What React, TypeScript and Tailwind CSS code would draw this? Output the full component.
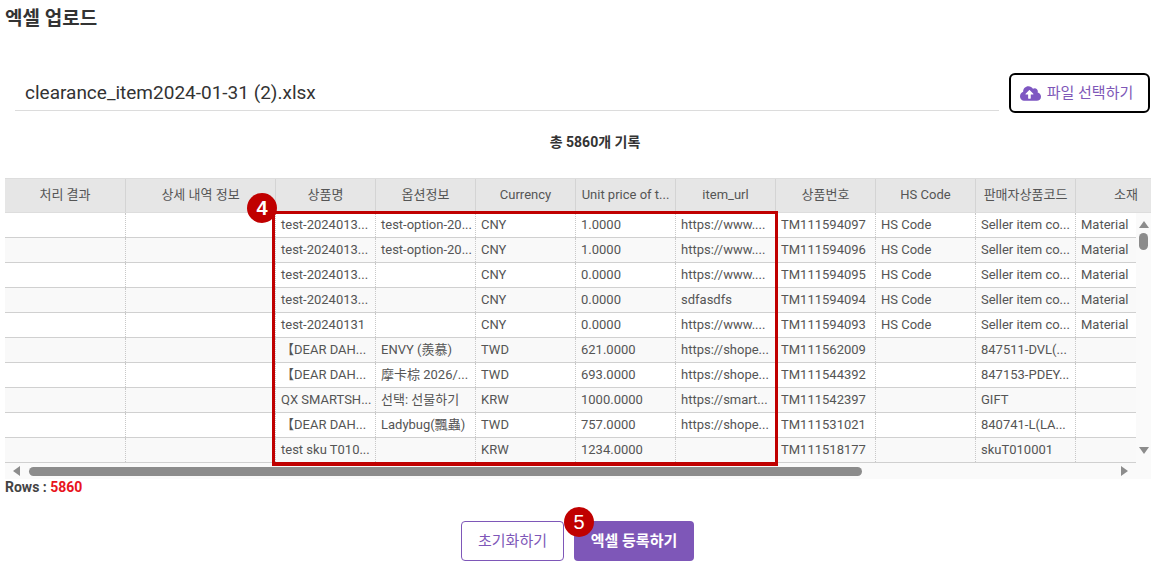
import React from 'react';
import { FaCloudUploadAlt } from 'react-icons/fa';

const font = { fontFamily: 'Roboto, "Noto Sans CJK KR", sans-serif' };

const columns = [
  { label: '처리 결과', width: 'w-[121px]' },
  { label: '상세 내역 정보', width: 'w-[150px]' },
  { label: '상품명', width: 'w-[100px]' },
  { label: '옵션정보', width: 'w-[100px]' },
  { label: 'Currency', width: 'w-[100px]' },
  { label: 'Unit price of t...', width: 'w-[100px]' },
  { label: 'item_url', width: 'w-[100px]' },
  { label: '상품번호', width: 'w-[100px]' },
  { label: 'HS Code', width: 'w-[100px]' },
  { label: '판매자상품코드', width: 'w-[100px]' },
  { label: '소재', width: 'w-[100px]' },
];

const rows = [
  ['', '', 'test-2024013...', 'test-option-20...', 'CNY', '1.0000', 'https://www....', 'TM111594097', 'HS Code', 'Seller item co...', 'Material'],
  ['', '', 'test-2024013...', 'test-option-20...', 'CNY', '1.0000', 'https://www....', 'TM111594096', 'HS Code', 'Seller item co...', 'Material'],
  ['', '', 'test-2024013...', '', 'CNY', '0.0000', 'https://www....', 'TM111594095', 'HS Code', 'Seller item co...', 'Material'],
  ['', '', 'test-2024013...', '', 'CNY', '0.0000', 'sdfasdfs', 'TM111594094', 'HS Code', 'Seller item co...', 'Material'],
  ['', '', 'test-20240131', '', 'CNY', '0.0000', 'https://www....', 'TM111594093', 'HS Code', 'Seller item co...', 'Material'],
  ['', '', '【DEAR DAH...', 'ENVY (羨慕)', 'TWD', '621.0000', 'https://shope...', 'TM111562009', '', '847511-DVL(...', ''],
  ['', '', '【DEAR DAH...', '摩卡棕 2026/...', 'TWD', '693.0000', 'https://shope...', 'TM111544392', '', '847153-PDEY...', ''],
  ['', '', 'QX SMARTSH...', '선택: 선물하기', 'KRW', '1000.0000', 'https://smart...', 'TM111542397', '', 'GIFT', ''],
  ['', '', '【DEAR DAH...', 'Ladybug(飄蟲)', 'TWD', '757.0000', 'https://shope...', 'TM111531021', '', '840741-L(LA...', ''],
  ['', '', 'test sku T010...', '', 'KRW', '1234.0000', '', 'TM111518177', '', 'skuT010001', ''],
];

function Badge({ n, bold }: { n: number; bold?: boolean }) {
  return (
    <div
      className={`absolute flex h-[30px] w-[30px] items-center justify-center rounded-full bg-[#c00000] font-['Liberation_Sans',sans-serif] text-[20px] text-white ${bold ? 'font-bold' : 'font-normal'}`}
    >
      {n}
    </div>
  );
}

function Arrow({ dir }: { dir: 'up' | 'down' | 'left' | 'right' }) {
  const points = {
    up: '0,8 10,8 5,1',
    down: '0,1 10,1 5,8',
    left: '8,0 8,10 1,5',
    right: '1,0 1,10 8,5',
  }[dir];
  return (
    <svg width="10" height="10" viewBox="0 0 10 10" className="shrink-0">
      <polygon points={points} fill="#8c8c8c" />
    </svg>
  );
}

export default function App() {
  return (
    <div style={font} className="h-[568px] w-[1155px] overflow-hidden bg-white text-[#333]">
      <h1 className="pl-[5px] pt-[7px] text-[19px] leading-[24px] font-bold text-[#333]">엑셀 업로드</h1>

      <div className="mt-[42px] flex items-start pl-[15px]">
        <div className="h-[38px] w-[984px] border-b border-[#dcdcdc] pl-[10px] text-[19px] leading-[40px] text-[#333]">
          clearance_item2024-01-31 (2).xlsx
        </div>
        <button className="ml-[10px] flex h-[40px] w-[141px] items-center justify-center gap-[6px] rounded-[6px] border-2 border-black bg-white pr-[6px] text-[15px] text-[#7e57b8]">
          <FaCloudUploadAlt className="h-[21px] w-[21px] text-[#7e57c2]" />
          파일 선택하기
        </button>
      </div>

      <p className="mt-[20px] pl-[35px] text-center text-[14px] leading-[18px] font-bold text-[#333]">총 5860개 기록</p>

      <div className="relative mt-[27px] ml-[5px] w-[1146px]">
        <div className="flex h-[35px] overflow-hidden border-t border-b border-[#dddddd] bg-[#e6e6e6]">
          {columns.map((c) => (
            <div
              key={c.label}
              className={`${c.width} shrink-0 border-r border-[#d4d4d4] pt-[7px] text-center text-[13px] leading-[18px] text-[#555] last:border-r-0`}
            >
              {c.label}
            </div>
          ))}
        </div>

        <div className="flex">
          <div className="w-[1131px] overflow-hidden">
            {rows.map((row, i) => (
              <div
                key={i}
                className={`flex h-[25px] border-b border-[#d0d0d0] ${i % 2 === 1 ? 'bg-[#f9f9f9]' : 'bg-white'}`}
              >
                {row.map((cell, j) => (
                  <div
                    key={j}
                    className={`${columns[j].width} shrink-0 border-r border-dotted border-[#c8c8c8] px-[5px] text-[13px] leading-[24px] whitespace-nowrap text-[#555] last:border-r-0`}
                  >
                    {cell}
                  </div>
                ))}
              </div>
            ))}
          </div>
          <div className="flex w-[15px] flex-col items-center bg-[#fafafa] pt-[7px]">
            <Arrow dir="up" />
            <div className="mt-[3px] h-[17px] w-[9px] rounded-full bg-[#8c8c8c]" />
            <div className="mt-auto mb-[7px]">
              <Arrow dir="down" />
            </div>
          </div>
        </div>

        <div className="flex h-[16px] items-center bg-[#fafafa] pr-[21px] pl-[7px]">
          <Arrow dir="left" />
          <div className="ml-[7px] h-[9px] w-[833px] rounded-full bg-[#8c8c8c]" />
          <div className="ml-auto">
            <Arrow dir="right" />
          </div>
        </div>

        <div className="pointer-events-none absolute top-[33px] left-[267px] h-[255px] w-[506px] border-[3px] border-b-4 border-[#c00000]" />
        <div className="absolute top-[15px] left-[242px]">
          <Badge n={4} bold />
        </div>
      </div>

      <p className="-mt-px pl-[5px] text-[14px] leading-[18px] font-bold text-[#444]">
        Rows : <span className="text-[#e8141c]">5860</span>
      </p>

      <div className="mt-[25px] flex justify-center gap-[10px]">
        <button className="h-[40px] w-[103px] rounded-[4px] border border-[#7e57b8] bg-white text-[15px] text-[#7e57b8]">
          초기화하기
        </button>
        <div className="relative">
          <button className="h-[40px] w-[120px] rounded-[4px] bg-[#7e57b8] text-[15px] font-bold text-white">
            엑셀 등록하기
          </button>
          <div className="absolute -top-[14px] -left-[10px]">
            <Badge n={5} />
          </div>
        </div>
      </div>
    </div>
  );
}
